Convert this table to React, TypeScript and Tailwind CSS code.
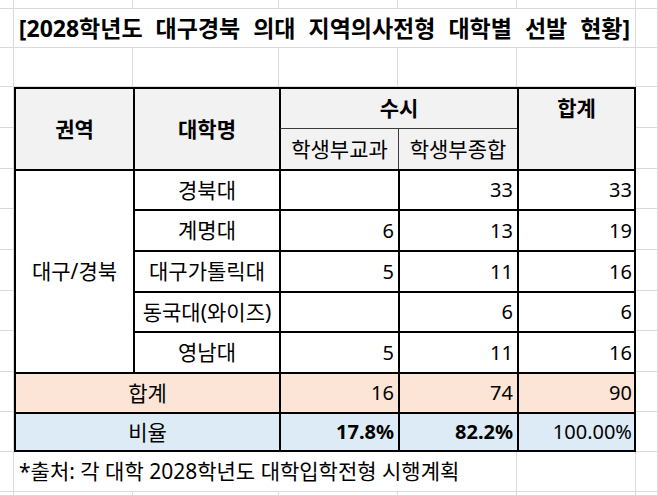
import React from "react";

// full class names so tailwind picks them up
const COL = ["col-start-1", "col-start-2", "col-start-3", "col-start-4", "col-start-5", "col-start-6", "col-start-7"];
const ROW = [
  "row-start-1", "row-start-2", "row-start-3", "row-start-4", "row-start-5", "row-start-6", "row-start-7",
  "row-start-8", "row-start-9", "row-start-10", "row-start-11", "row-start-12", "row-start-13", "row-start-14",
];

const universities = [
  { name: "경북대", subject: "", comprehensive: "33", total: "33" },
  { name: "계명대", subject: "6", comprehensive: "13", total: "19" },
  { name: "대구가톨릭대", subject: "5", comprehensive: "11", total: "16" },
  { name: "동국대(와이즈)", subject: "", comprehensive: "6", total: "6" },
  { name: "영남대", subject: "5", comprehensive: "11", total: "16" },
];

const cell = "flex items-center border-l-2 border-t-2 border-black";
const num = "text-[20px]";

export default function App() {
  const gridCells = [];
  for (let r = 0; r < 14; r++) {
    for (let c = 0; c < 7; c++) {
      gridCells.push(
        <div key={`g-${r}-${c}`} className={`${ROW[r]} ${COL[c]} border-r border-b border-[#dadada]`} />
      );
    }
  }

  return (
    <div className="w-[658px] h-[496px] overflow-hidden bg-white text-black font-['Noto_Sans','Noto_Sans_CJK_KR',sans-serif] text-[21px] leading-none">
      <div className="grid grid-cols-[14px_119px_146px_119px_119px_119px_22px] grid-rows-[9px_39px_39px_41px_41px_40px_41px_41px_40px_41px_40px_40px_40px_4px] h-full">
        {gridCells}

        {/* title */}
        <div className="col-start-2 col-span-5 row-start-2 flex items-center justify-center bg-white border-r border-b border-[#dadada] text-[23px] font-bold whitespace-nowrap [word-spacing:7px]">
          [2028학년도 대구경북 의대 지역의사전형 대학별 선발 현황]
        </div>

        {/* header */}
        <div className={`${cell} col-start-2 row-start-4 row-span-2 justify-center bg-[#f2f2f2] font-bold`}>권역</div>
        <div className={`${cell} col-start-3 row-start-4 row-span-2 justify-center bg-[#f2f2f2] font-bold`}>대학명</div>
        <div className={`${cell} col-start-4 col-span-2 row-start-4 justify-center bg-[#f2f2f2] font-bold`}>수시</div>
        <div className="col-start-6 row-start-4 row-span-2 flex flex-col border-l-2 border-t-2 border-r-2 border-black bg-[#f2f2f2] font-bold">
          <div className="h-[39px] flex items-center justify-center">합계</div>
        </div>
        <div className="col-start-4 row-start-5 flex items-center justify-center border-l-2 border-black border-t border-t-[#3a3a3a] bg-[#f2f2f2]">
          학생부교과
        </div>
        <div className="col-start-5 row-start-5 flex items-center justify-center border-l border-t border-[#3a3a3a] bg-[#f2f2f2]">
          학생부종합
        </div>

        {/* body */}
        <div className={`${cell} col-start-2 row-start-6 row-span-5 justify-center bg-white`}>대구/경북</div>
        {universities.map((u, i) => (
          <React.Fragment key={u.name}>
            <div className={`${cell} ${ROW[5 + i]} col-start-3 justify-center bg-white`}>{u.name}</div>
            <div className={`${cell} ${num} ${ROW[5 + i]} col-start-4 justify-end pr-[4px] bg-white`}>{u.subject}</div>
            <div className={`${cell} ${num} ${ROW[5 + i]} col-start-5 justify-end pr-[4px] bg-white`}>{u.comprehensive}</div>
            <div className={`${cell} ${num} ${ROW[5 + i]} col-start-6 justify-end pr-[2px] border-r-2 bg-white`}>{u.total}</div>
          </React.Fragment>
        ))}

        {/* total */}
        <div className={`${cell} col-start-2 col-span-2 row-start-11 justify-center bg-[#fce4d6]`}>합계</div>
        <div className={`${cell} ${num} col-start-4 row-start-11 justify-end pr-[4px] bg-[#fce4d6]`}>16</div>
        <div className={`${cell} ${num} col-start-5 row-start-11 justify-end pr-[4px] bg-[#fce4d6]`}>74</div>
        <div className={`${cell} ${num} col-start-6 row-start-11 justify-end pr-[2px] border-r-2 bg-[#fce4d6]`}>90</div>

        {/* ratio */}
        <div className={`${cell} col-start-2 col-span-2 row-start-12 justify-center border-b-2 bg-[#ddebf7]`}>비율</div>
        <div className={`${cell} ${num} col-start-4 row-start-12 justify-end pr-[4px] border-b-2 bg-[#ddebf7] font-bold`}>17.8%</div>
        <div className={`${cell} ${num} col-start-5 row-start-12 justify-end pr-[4px] border-b-2 bg-[#ddebf7] font-bold`}>82.2%</div>
        <div className={`${cell} ${num} col-start-6 row-start-12 justify-end pr-[2px] border-r-2 border-b-2 bg-[#ddebf7]`}>100.00%</div>

        {/* source note */}
        <div className="col-start-2 col-span-4 row-start-13 flex items-center pl-[5px] bg-white border-r border-b border-[#dadada] whitespace-nowrap">
          *출처: 각 대학 2028학년도 대학입학전형 시행계획
        </div>
      </div>
    </div>
  );
}
